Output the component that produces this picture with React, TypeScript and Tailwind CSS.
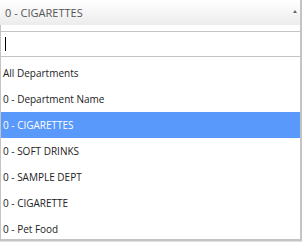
import React from "react";

const items = [
  "All Departments",
  "0 - Department Name",
  "0 - CIGARETTES",
  "0 - SOFT DRINKS",
  "0 - SAMPLE DEPT",
  "0 - CIGARETTE",
  "0 - Pet Food",
];

export default function App() {
  return (
    <div
      className="w-[302px] h-[242px] bg-white overflow-hidden flex flex-col"
      style={{ fontFamily: '"Open Sans", "Noto Sans", sans-serif' }}
    >
      <div className="h-[25px] shrink-0 flex items-center justify-between pl-[5px] pr-[2px] bg-gradient-to-b from-[#ffffff] to-[#ececec] border-r-2 border-[#c4c4c4] text-[11px] text-[#555]">
        <span className="leading-none">0 - CIGARETTES</span>
        <span className="self-start mt-[10px] mr-[1px] w-0 h-0 border-l-[2px] border-r-[2px] border-b-[3px] border-l-transparent border-r-transparent border-b-[#666]" />
      </div>
      <div className="flex-1 flex flex-col border-l border-r-2 border-b-2 border-[#c4c4c4] bg-white min-h-0">
        <div className="pt-[6px]">
          <div className="h-[26px] border border-[#c4c4c4] border-l-0 border-r-0 flex items-center pl-[4px]">
            <div className="w-px h-[14px] bg-black" />
          </div>
        </div>
        <div className="pt-[3px] flex flex-col text-[10px] text-[#222] overflow-hidden">
          {items.map((it, i) => (
            <div
              key={i}
              className={
                "h-[26px] shrink-0 flex items-center pl-[2px] " +
                (i === 2 ? "bg-[#5999fb] text-white" : "")
              }
            >
              {it}
            </div>
          ))}
        </div>
      </div>
      <div className="h-[1px] shrink-0 bg-[#e0e0e0]" />
    </div>
  );
}
